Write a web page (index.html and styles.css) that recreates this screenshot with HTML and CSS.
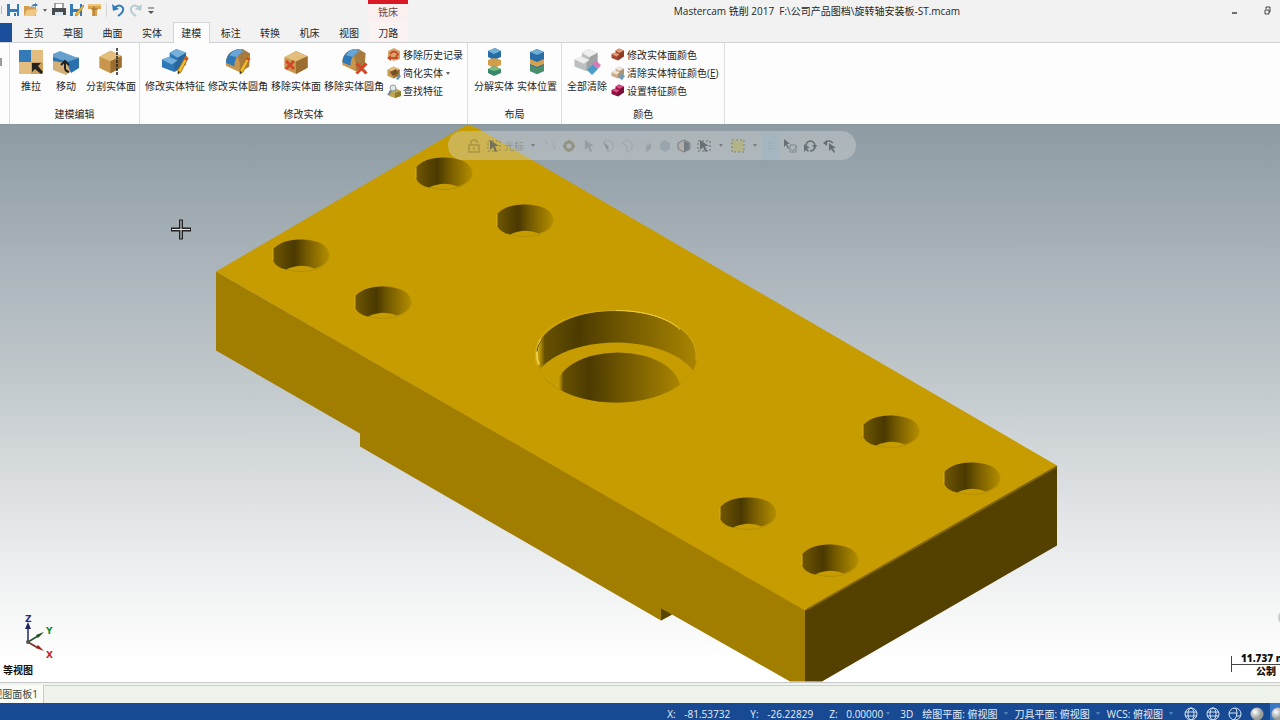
FILE: index.html
```html
<!DOCTYPE html>
<html lang="zh-CN">
<head>
<meta charset="utf-8">
<meta name="viewport" content="width=device-width, initial-scale=1">
<title>Mastercam 铣削 2017</title>
<link rel="stylesheet" href="styles.css">
</head>
<body>
<svg class="defs" aria-hidden="true">
  <defs>
    <symbol id="box-tan" viewBox="0 0 28 28"><path d="M1 8 14 1l13 6v13l-13 7-13-6z" fill="#c8964c"/><path d="M1 8 14 1l13 6-13 6z" fill="#e3bd7b"/><path d="m14 13 13-6v13l-13 7z" fill="#9b6d2e"/></symbol>
    <symbol id="fillet" viewBox="0 0 28 28"><path d="M1 14C2 7 6 4 12 2l14 6v12l-10 6-15-7z" fill="#c8964c"/><path d="m12 2 7-1 8 5-1 14-10 6v-9z" fill="#a77a3d"/><path d="M1 15C2 7 7 2 15 1l6 3c-7 2-11 8-11 16l-9-4z" fill="#2e78b8"/><path d="M5 8c2-4 5-6 10-7l6 3c-4 1-6 3-8 6z" fill="#66a5d5"/></symbol>
    <symbol id="steps" viewBox="0 0 28 28"><path d="M1 12 9 9V5l7-4 10 4v12l-12 8-13-5z"/><path class="step-top" d="m9 5 7-4 10 4-9 5zM1 12l7-3 9 4-6 4z"/><path class="step-mid" d="m17 10 9-5v12l-12 8v-9l3-3z"/></symbol>
    <symbol id="pencil" viewBox="0 0 12 20"><path d="m9 1 2 2-7 14-3 2V15z" fill="#f0bd30" stroke="#b57b12"/><path d="m8 2 3 1-1 3-3-2z" fill="#c94a27"/><path d="m1 16 2 1-2 2z" fill="#333"/></symbol>
    <symbol id="cross" viewBox="0 0 12 12"><path d="m2 2 8 8m0-8-8 8" stroke="#d34628" stroke-width="2.5"/></symbol>
    <symbol id="arrow" viewBox="0 0 14 14"><path d="M3 1v10l3-3 2 5 2-1-2-5h4z" fill="#4d5558"/></symbol>
    <symbol id="globe" viewBox="0 0 14 14"><g fill="none" stroke="#d9e7f5"><circle cx="7" cy="7" r="6"/><ellipse cx="7" cy="7" rx="3" ry="6"/><path d="M1 5h12M1 9h12"/></g></symbol>
    <linearGradient id="bore"><stop offset="0" stop-color="#705700"/><stop offset=".38" stop-color="#493800"/><stop offset=".6" stop-color="#755b00"/><stop offset="1" stop-color="#b38d00"/></linearGradient>
    <linearGradient id="wall"><stop offset="0" stop-color="#d7ab12"/><stop offset=".03" stop-color="#b99100"/><stop offset=".06" stop-color="#665000"/><stop offset=".27" stop-color="#4c3b00"/><stop offset=".55" stop-color="#715800"/><stop offset="1" stop-color="#aa8500"/></linearGradient>
    <radialGradient id="ball" cx=".35" cy=".35"><stop stop-color="#fff"/><stop offset="1" stop-color="#999e9d"/></radialGradient>
    <clipPath id="counterbore"><ellipse cx="616" cy="356" rx="81" ry="46"/></clipPath>
    <g id="hole"><ellipse cx="0" cy="0" rx="28" ry="16" fill="none" stroke="#b58f00"/><path d="M-28-6Q-20-16 0-16 28-15 28 0 27 9 14 13 0 7-15 14-25 12-28 5z" fill="url(#bore)"/><path d="M-28-6v11" stroke="#dcb125" fill="none"/></g>
  </defs>
</svg>

<header class="titlebar">
  <div class="quick">
    <span class="edge-mark"></span>
    <button class="qa" aria-label="保存"><svg viewBox="0 0 14 14"><path d="M1 1h12v12H1z" fill="#347bb7"/><path d="M4 1h7v5H4zM4 9h7v4H4z" fill="#f4f7fa"/><path d="M8 10h2v3H8z" fill="#347bb7"/></svg></button>
    <button class="qa" aria-label="打开"><svg viewBox="0 0 14 14"><path d="M0 3h5l1 1h6v9H0z" fill="#d59e4f"/><path d="m3 7 11-1-3 7H0z" fill="#efc984"/><path d="M7 4q1-3 4-3V0l3 2-3 2V3Q9 3 7 4" fill="#3d7db1"/></svg></button>
    <span class="caret"></span>
    <button class="qa" aria-label="打印"><svg viewBox="0 0 14 14"><path d="M3 0h8v6H3z" fill="#fff" stroke="#555"/><path d="M0 5h14v7H0z" fill="#484d50"/><path d="M3 9h8v4H3z" fill="#dceaf3"/></svg></button>
    <button class="qa" aria-label="另存为"><svg viewBox="0 0 14 14"><path d="M0 1h12v12H0z" fill="#347bb7"/><path d="M3 1h7v5H3zM3 9h7v4H3z" fill="#f4f7fa"/><path d="m13 2 1 1-6 9-3 1 1-3z" fill="#efbd3c" stroke="#9b711f" stroke-width=".6"/></svg></button>
    <button class="qa" aria-label="打包"><svg viewBox="0 0 14 14"><path d="M0 1h13v5H9v7H4V6H0z" fill="#dba651"/><path d="M0 1h13v2H0z" fill="#efc77f"/><path d="M6 3v10M3 6h7" stroke="#9a6d2b"/></svg></button>
    <i class="divider"></i>
    <button class="qa" aria-label="撤销"><svg viewBox="0 0 14 14"><path d="M3 5q6-5 9 0 1 4-5 8" fill="none" stroke="#347bb7" stroke-width="2"/><path d="m1 1 1 7 6-2z" fill="#347bb7"/></svg></button>
    <button class="qa" aria-label="重做"><svg viewBox="0 0 14 14"><path d="M11 5Q5 0 2 5q-1 4 5 8" fill="none" stroke="#b9cad5" stroke-width="2"/><path d="m13 1-1 7-6-2z" fill="#b9cad5"/></svg></button>
    <button class="qa customize" aria-label="自定义"><svg viewBox="0 0 14 14"><path d="M4 5h6" stroke="#555"/><path d="M4 8h6l-3 3z" fill="#555"/></svg></button>
  </div>
  <div class="context-name">铣床</div>
  <h1>Mastercam 铣削 2017&nbsp; F:\公司产品图档\旋转轴安装板-ST.mcam</h1>
  <div class="window-controls">
    <button aria-label="最小化"><svg viewBox="0 0 12 12"><path d="M4 8h5" stroke="#444" stroke-width="1.5"/></svg></button>
    <button aria-label="还原"><svg viewBox="0 0 12 12"><path d="M5 4V2h4v5H8M4 5h4v4H4z" fill="none" stroke="#444"/></svg></button>
  </div>
</header>

<nav class="tabs" aria-label="功能区">
  <button class="file-tab" aria-label="文件"></button>
  <div class="tab-list">
    <button>主页</button><button>草图</button><button>曲面</button><button>实体</button><button class="active">建模</button><button>标注</button><button>转换</button><button>机床</button><button>视图</button><button class="context">刀路</button>
  </div>
</nav>

<main>
<section class="ribbon" aria-label="建模">
  <div class="ribbon-edge"><i></i></div>
  <div class="group">
    <div class="tools edit">
      <button class="tool"><svg viewBox="0 0 28 28"><path d="M2 2h12v12H2z" fill="#3479b8"/><path d="M14 2h12v12H14zM2 14h12v12H2z" fill="#e3bd80"/><path d="M14 14h12v12H14z" fill="#cda160"/><path d="M15 15h9l-3 3 5 6-2 2-6-5-3 3z" fill="#222"/></svg>推拉</button>
      <button class="tool"><svg viewBox="0 0 28 28"><path d="M1 13v9l13 5 13-9V9z" fill="#d3b078"/><path d="m1 6 7-3 18 7-7 6-18-5z" fill="#66a1ce"/><path d="m1 9 14 5 12-4v10l-8 5-4-10-14-2z" fill="#2970ae"/><path d="m9 17 4-4 4 4M13 14v6q0 3 4 4" fill="none" stroke="#222" stroke-width="2"/></svg>移动</button>
      <button class="tool"><svg viewBox="0 0 28 28"><use href="#box-tan" y="2" width="27" height="24"/><path d="M20 0v28" stroke="#222" stroke-width="1.5" stroke-dasharray="3 1"/></svg>分割实体面</button>
    </div>
    <h2>建模编辑</h2>
  </div>
  <div class="group">
    <div class="tools modify">
      <button class="tool"><svg viewBox="0 0 28 28"><use class="steps-blue" href="#steps" width="27" height="27"/><use href="#pencil" x="16" y="7" width="12" height="20"/></svg>修改实体特征</button>
      <button class="tool"><svg viewBox="0 0 28 28"><use href="#fillet" width="28" height="26"/><use href="#pencil" x="15" y="7" width="12" height="20"/></svg>修改实体圆角</button>
      <button class="tool"><svg viewBox="0 0 28 28"><use href="#box-tan" y="2" width="28" height="25"/><use href="#cross" x="2" y="11" width="12" height="12"/></svg>移除实体面</button>
      <button class="tool"><svg viewBox="0 0 28 28"><use href="#fillet" width="28" height="25"/><use href="#cross" x="14" y="13" width="15" height="15"/></svg>移除实体圆角</button>
      <div class="small-tools">
        <button><svg viewBox="0 0 14 14"><path d="m1 3 6-3 6 3v8l-6 2-6-3z" fill="#d6a568"/><path d="M3 6q4-5 8 0l-2 3m-6 1h8" fill="none" stroke="#c94a2d" stroke-width="2"/><path d="m0 10 4-3v6z" fill="#c94a2d"/></svg>移除历史记录</button>
        <button><svg viewBox="0 0 14 14"><use href="#box-tan" width="13" height="13"/><path d="m3 6 6-3 2 4-5 3z" fill="#765026"/><path d="m9 13 3-5 2 2-3 4z" fill="#6995b9"/></svg>简化实体<span class="caret"></span></button>
        <button><svg viewBox="0 0 14 14"><path d="m2 7 6-3 6 3v5l-6 2-6-2z" fill="#bda554"/><path d="m8 9 6-2v5l-6 2z" fill="#8e7c30"/><circle cx="6" cy="4" r="3" fill="#dfe8ea" stroke="#8c9ba0"/><path d="m4 7-3 4" stroke="#71858d" stroke-width="2"/></svg>查找特征</button>
      </div>
    </div>
    <h2>修改实体</h2>
  </div>
  <div class="group">
    <div class="tools layout">
      <button class="tool"><svg viewBox="0 0 28 28"><path d="m8 3 7-3 6 3v6l-7 3-6-3z" fill="#276ba4"/><path d="m8 3 7-3 6 3-7 3z" fill="#70afd8"/><path d="m8 12 6-2 7 2v5l-7 3-6-3z" fill="#d39c49"/><path d="m8 21 6-3 7 3v4l-7 3-6-3z" fill="#378969"/><path d="m8 21 6-3 7 3-7 2z" fill="#77b985"/></svg>分解实体</button>
      <button class="tool"><svg viewBox="0 0 28 28"><path d="m7 4 7-3 7 3v19l-7 3-7-3z" fill="#286da7"/><path d="m7 4 7-3 7 3-7 3z" fill="#72add6"/><path d="m7 11 7 3 7-3v5l-7 3-7-3z" fill="#d8a14d"/><path d="m7 17 7 3 7-3v6l-7 3-7-3z" fill="#48906b"/></svg>实体位置</button>
    </div>
    <h2>布局</h2>
  </div>
  <div class="group last">
    <div class="tools colors">
      <button class="tool"><svg viewBox="0 0 28 28"><use class="steps-gray" href="#steps" width="27" height="26"/><path d="m14 22 6-6 5 5-6 6z" fill="#4b9cc7"/><path d="m19 16 4-3 5 4-3 4z" fill="#d878b6"/></svg>全部清除</button>
      <div class="small-tools">
        <button><svg viewBox="0 0 14 14"><use class="steps-red" href="#steps" width="14" height="14"/></svg>修改实体面颜色</button>
        <button><svg viewBox="0 0 14 14"><use class="steps-cream" href="#steps" width="14" height="14"/><path d="m8 12 3-4 3 2-3 4z" fill="#6b9abd"/></svg>清除实体特征颜色(<u>E</u>)</button>
        <button><svg viewBox="0 0 14 14"><use class="steps-pink" href="#steps" width="14" height="14"/></svg>设置特征颜色</button>
      </div>
    </div>
    <h2>颜色</h2>
  </div>
</section>

<section class="viewport" aria-label="图形窗口">
  <svg class="scene" viewBox="0 124 1280 558" preserveAspectRatio="xMidYMid slice" role="img" aria-label="旋转轴安装板">
    <path d="M216 271 805 609V681H790L672 614 661 620 360 446V433L216 350z" fill="#a17d00"/>
    <path d="M661 608v12l11-6z" fill="#594500"/>
    <path d="m805 609 252-144v80L822 681H805z" fill="#544100"/>
    <path d="M216 271 462 127 468 124l10 4 579 337-252 145z" fill="#c69c00"/>
    <path d="m807 609 250-143" stroke="#806500" stroke-width="2"/>
    <use href="#hole" x="444" y="173"/><use href="#hole" x="525" y="220"/><use href="#hole" x="301" y="255"/><use href="#hole" x="383" y="302"/>
    <use href="#hole" x="891" y="431"/><use href="#hole" x="972" y="478"/><use href="#hole" x="748" y="513"/><use href="#hole" x="830" y="560"/>
    <g clip-path="url(#counterbore)">
      <path d="M535 309h162v94H535z" fill="url(#wall)"/>
      <ellipse cx="616" cy="388" rx="84" ry="46" fill="#c69c00"/>
      <ellipse cx="618" cy="388" rx="62" ry="36" fill="url(#wall)"/>
    </g>
    <path d="M537 365C527 333 562 310 616 310c46 0 84 20 80 50" fill="none" stroke="#d6ac14"/>
    <path d="M616 310c28 0 51 7 64 19" fill="none" stroke="#ecd046"/>
    <path d="M541 339q-7 14-2 25" fill="none" stroke="#ead04b" stroke-width="2"/>
    <path d="M537 351q0-5 5-12" fill="none" stroke="#584500"/>
    <path d="M179 219h4v8h8v4h-8v8h-4v-8h-8v-4h8z" fill="#222"/><path d="M181 220v18m-9-9h18" stroke="#e9eff1"/>
    <circle cx="1286" cy="617" r="8" fill="#c8ccce"/>
  </svg>
  <div class="selection-bar" role="toolbar" aria-label="选择">
    <button aria-label="锁定"><svg viewBox="0 0 14 14"><path d="M2 6h10v7H2zM4 6V2q3-2 6 0v2M7 8v3" fill="none" stroke="#9a873e" stroke-width="1.5"/></svg></button>
    <button aria-label="选择"><svg viewBox="0 0 14 14"><path d="M1 2h12v10H1z" fill="none" stroke="#75714c" stroke-dasharray="2"/><use href="#arrow" width="14" height="14"/></svg></button>
    <span class="cursor-label">光标</span><span class="caret"></span>
    <button class="faint" aria-label="端点"><svg viewBox="0 0 14 14"><path d="m2 2 3 3m4 1 3-3M11 7v4" stroke="#65757a"/></svg></button>
    <button class="mid" aria-label="设置"><svg viewBox="0 0 14 14"><circle cx="7" cy="7" r="4" fill="none" stroke="#827d60" stroke-width="3"/><path d="M7 1v2m0 8v2M1 7h2m8 0h2" stroke="#827d60" stroke-width="2"/></svg></button>
    <button class="faint" aria-label="箭头"><svg viewBox="0 0 14 14"><use href="#arrow" width="14" height="14"/></svg></button>
    <button class="faint" aria-label="边界"><svg viewBox="0 0 14 14"><path d="m2 3 5-2 5 3v6l-5 3V7z" fill="none" stroke="#6d7982"/><path d="m2 3 5 4v5" stroke="#6d7982"/></svg></button>
    <button class="faint" aria-label="面"><svg viewBox="0 0 14 14"><path d="m2 4 5-3 5 3v6l-5 3V7z" fill="none" stroke="#6d7982"/></svg></button>
    <button class="faint" aria-label="实体面"><svg viewBox="0 0 14 14"><path d="m2 4 5-3 5 3v6l-5 3V7z" fill="#a3aeb5"/><path d="m7 7 5-3v6l-5 3z" fill="#596a78"/></svg></button>
    <button class="faint" aria-label="实体"><svg viewBox="0 0 14 14"><path d="m2 4 5-3 5 3v6l-5 3-5-3z" fill="#62778b"/></svg></button>
    <button class="mid" aria-label="背面"><svg viewBox="0 0 14 14"><path d="m1 4 6-3 6 3v6l-6 3-6-3z" fill="#b5aaa0" stroke="#565b62"/><path d="m7 2 5 2v6l-5 3z" fill="#4f575f"/></svg></button>
    <button aria-label="窗选"><svg viewBox="0 0 14 14"><path d="M1 2h12v10H1z" fill="none" stroke="#4c5558" stroke-dasharray="2"/><use href="#arrow" width="14" height="14"/></svg></button>
    <span class="caret"></span>
    <button class="mid" aria-label="范围"><svg viewBox="0 0 14 14"><path d="M1 1h12v12H1z" fill="#b9b46a" stroke="#58625c" stroke-dasharray="2"/></svg></button>
    <span class="caret"></span>
    <button class="picked" aria-label="验证"><svg viewBox="0 0 14 14"><path d="M4 4h6M4 7h4M4 10h6" stroke="#91a9bb"/></svg></button>
    <button aria-label="验证选择"><svg viewBox="0 0 14 14"><path d="M1 0v8l2-2 2 4 1-1-2-4h3z" fill="#485457"/><path d="M7 6h6v7H7zm1 4 2 2 4-5" fill="none" stroke="#6b797d"/></svg></button>
    <button aria-label="反选"><svg viewBox="0 0 14 14"><path d="M3 7q0-4 4-5 4 0 5 4M12 8q-1 4-5 4" fill="none" stroke="#485457" stroke-width="1.5"/><path d="m9 6h5l-2 4zM1 5v8l2-2 2 2 1-1-2-3h3z" fill="#485457"/></svg></button>
    <button aria-label="选择上次"><svg viewBox="0 0 14 14"><path d="M2 4q4-4 8 0" fill="none" stroke="#485457" stroke-width="1.5"/><path d="M0 4 4 1v6zM6 4v8l2-2 3 4 1-1-2-4h3z" fill="#485457"/></svg></button>
  </div>
  <div class="view-info">
    <svg viewBox="0 0 56 44" role="img" aria-label="坐标轴"><path d="M28 27V12" stroke="#202765" stroke-width="1.5"/><path d="m25 14 3-7 3 7z" fill="#202765"/><path d="m28 27 10-6" stroke="#205129" stroke-width="1.5"/><path d="m36 20 8-3-6 6z" fill="#205129"/><path d="m28 27 10 6" stroke="#7d2920" stroke-width="1.5"/><path d="m38 30 6 6-8-3z" fill="#a22018"/><circle cx="28" cy="27" r="2" fill="#555"/><text x="25" y="7" fill="#252c86">Z</text><text x="46" y="19" fill="#188b28">Y</text><text x="46" y="43" fill="#bc2320">X</text></svg>
    <strong>等视图</strong>
  </div>
  <div class="scale"><strong>11.737 mm</strong><strong>公制</strong></div>
</section>
</main>

<nav class="view-panels" aria-label="视图面板"><button>视图面板1</button></nav>
<footer class="status">
  <span class="axis">X:</span><output>-81.53732</output>
  <span class="axis">Y:</span><output>-26.22829</output>
  <span class="axis">Z:</span><output class="z-value">0.00000</output><span class="caret"></span>
  <button class="mode">3D</button>
  <button>绘图平面: 俯视图</button><span class="caret"></span>
  <button>刀具平面: 俯视图</button><span class="caret"></span>
  <button>WCS: 俯视图</button><span class="caret"></span>
  <div class="shading">
    <button aria-label="线框"><svg viewBox="0 0 14 14"><use href="#globe"/></svg></button>
    <button aria-label="隐藏线变暗"><svg viewBox="0 0 14 14"><use href="#globe"/></svg></button>
    <button aria-label="无隐藏线"><svg viewBox="0 0 14 14"><circle cx="7" cy="7" r="6" fill="none" stroke="#d9e7f5"/><path d="M1 6h8q0-4-2-5M9 6q0 4-3 7M9 9h4" fill="none" stroke="#d9e7f5"/></svg></button>
    <button aria-label="着色"><svg viewBox="0 0 14 14"><circle cx="7" cy="7" r="6.5" fill="url(#ball)"/></svg></button>
    <button class="on" aria-label="边框着色"><svg viewBox="0 0 14 14"><circle cx="7" cy="7" r="6.5" fill="url(#ball)"/></svg></button>
  </div>
</footer>
</body>
</html>
```

FILE: styles.css
```css
* { box-sizing: border-box; }

body {
  margin: 0;
  min-height: 100vh;
  display: flex;
  flex-direction: column;
  overflow-x: hidden;
  background: #f2f2f2;
  color: #262626;
  font: 10px/14px "Open Sans", "Noto Sans CJK SC", sans-serif;
}

main { flex: 1; display: flex; flex-direction: column; }
button { margin: 0; padding: 0; border: 0; background: none; color: inherit; font: inherit; white-space: nowrap; }
svg { display: block; flex: none; }
h1, h2 { margin: 0; font-size: 10px; font-weight: 400; }
.defs { position: absolute; width: 0; height: 0; }
.caret { flex: none; width: 0; height: 0; border: 2px solid transparent; border-top: 3px solid #666; border-bottom: 0; }

.titlebar { display: flex; height: 22px; }
.quick { width: 368px; display: flex; align-items: center; padding-bottom: 2px; gap: 4px; }
.edge-mark { width: 2px; height: 8px; border-right: 1px solid #bbb; }
.qa svg { width: 14px; height: 14px; }
.quick .caret { margin: 0 1px; }
.divider { width: 1px; height: 14px; background: #d5d8da; }
.customize { margin-left: -3px; }
.context-name { width: 40px; padding-top: 1px; text-align: center; background: #faf0ef; border-top: 4px solid #d91725; color: #713e45; }
.titlebar h1 { flex: 1; padding-top: 4px; text-align: center; }
.window-controls { width: 54px; display: flex; align-items: center; gap: 21px; padding-left: 2px; }
.window-controls svg { width: 12px; height: 12px; }

.tabs { display: flex; height: 20px; }
.file-tab { width: 12px; margin: 1px 2px 0 0; background: #1b4f9c; }
.tab-list { width: 394px; display: grid; grid-template-columns: repeat(10, 1fr); }
.tab-list button { padding-top: 2px; }
.tab-list .active { position: relative; margin: 0 1px -1px; padding: 0; background: #fdfdfd; border: 1px solid #d4d5d7; border-bottom: 0; }
.tab-list .context { background: #faf3f2; }

.ribbon { display: flex; background: #fdfdfd; border-top: 1px solid #d0d3d5; border-bottom: 1px solid #8997a1; }
.ribbon-edge { width: 9px; padding-top: 15px; }
.ribbon-edge i { display: block; width: 2px; height: 8px; background: #9b9b9b; }
.group { display: flex; flex-direction: column; justify-content: space-between; gap: 7px; padding: 3px 0; border-left: 1px solid #dcdedf; }
.last { border-right: 1px solid #dcdedf; }
.group h2 { text-align: center; }
.tools { display: flex; gap: 3px; }
.edit { gap: 5px; padding: 0 3px 0 6px; }
.modify { padding: 0 4px 0 5px; }
.layout { padding: 0 4px 0 6px; }
.colors { gap: 4px; padding: 0 6px 0 5px; }
.tool { min-width: 30px; display: flex; flex-direction: column; align-items: center; gap: 3px; padding-top: 2px; }
.tool svg { width: 28px; height: 28px; }
.small-tools { display: grid; grid-template-rows: repeat(3, 18px); }
.small-tools button { display: flex; align-items: center; }
.small-tools svg { width: 14px; height: 14px; margin-right: 2px; }
.small-tools .caret { margin-left: 3px; }
.steps-blue { fill: #2f78b7; color: #75b0dd; }
.steps-gray { fill: #bdc0c1; color: #eeeeee; }
.steps-red { fill: #a64732; color: #e29a72; }
.steps-cream { fill: #c9ad8d; color: #f1e5d6; }
.steps-pink { fill: #8e123f; color: #dd4c8b; }
.step-top { fill: currentColor; }
.step-mid { fill: #000; fill-opacity: .15; }

.viewport { position: relative; flex: 1; min-height: 320px; overflow: hidden; background: linear-gradient(#8e9ba3 0%, #aab4ba 25%, #c6cdd0 50%, #e2e5e7 70%, #f4f5f5 86%, #fff 96%); }
.scene { position: absolute; inset: 0; width: 100%; height: 100%; }
.selection-bar { position: absolute; top: 6px; left: 35%; height: 29px; display: flex; align-items: center; padding: 0 16px; border-radius: 15px; background: rgba(218, 222, 217, .38); }
.selection-bar button { width: 20px; height: 20px; display: grid; place-items: center; opacity: .7; }
.selection-bar svg { width: 14px; height: 14px; }
.selection-bar .caret { margin: 0 5px; opacity: .7; }
.selection-bar .faint { width: 19px; opacity: .25; }
.selection-bar .mid { opacity: .6; }
.selection-bar .picked { width: 18px; height: 26px; background: rgba(151, 181, 207, .5); }
.cursor-label { width: 22px; color: #858b7b; opacity: .7; }

.view-info { position: absolute; left: 0; bottom: 5px; }
.view-info svg { width: 56px; height: 44px; overflow: visible; font: bold 9px "DejaVu Sans", sans-serif; }
.view-info strong { display: block; padding: 4px 0 0 3px; color: #111; }
.scale { position: absolute; right: 0; bottom: 5px; width: 49px; overflow: hidden; color: #111; font: bold 10px/12px "Noto Sans", "Noto Sans CJK SC", sans-serif; white-space: nowrap; }
.scale::before { content: ""; position: absolute; top: 4px; bottom: 5px; left: 0; border-left: 1px solid #444; }
.scale strong { display: block; padding-left: 10px; }
.scale strong + strong { padding-left: 25px; border-top: 1px solid #444; }

.view-panels { display: flex; height: 21px; background: #eef3ec; border-top: 1px solid #c7c9ca; padding-top: 2px; }
.view-panels::after { content: ""; flex: 1; border-top: 1px solid #cbd0cb; }
.view-panels button { width: 44px; display: flex; justify-content: flex-end; align-items: center; padding-right: 5px; overflow: hidden; background: #f9fbf7; border-right: 1px solid #c6ccc6; color: #374438; }

.status { height: 17px; display: flex; align-items: flex-start; justify-content: flex-end; overflow: hidden; padding-top: 4px; background: #184a93; color: #e5eef8; }
.axis { width: 17px; }
.status output { width: 66px; white-space: nowrap; }
.status output:nth-of-type(2) { width: 62px; }
.status .z-value { width: 38px; }
.status .caret { margin: 5px 7px 0 6px; border-top-color: #5684b8; }
.status .z-value + .caret { margin: 5px 10px 0 2px; }
.status .mode { margin-right: 9px; }
.shading { display: flex; }
.shading button { width: 22px; height: 17px; display: grid; justify-content: center; }
.shading svg { width: 14px; height: 14px; }
.shading .on { width: 10px; margin: -4px 0 0 2px; padding: 4px 0 0 1px; height: 21px; justify-content: start; overflow: hidden; background: #3977c3; }
```
